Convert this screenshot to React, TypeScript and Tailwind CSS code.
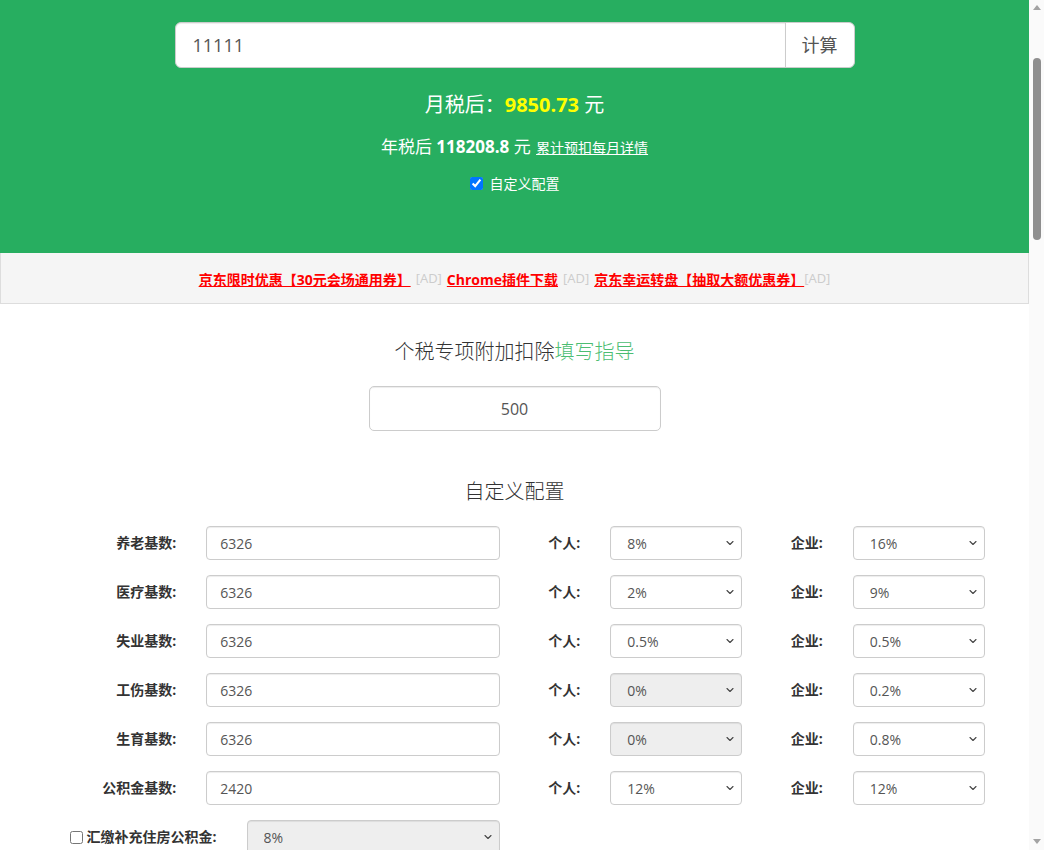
import React, { useState } from 'react';
import { ChevronDown } from 'lucide-react';

type Row = {
  label: string;
  base: string;
  personal: string;
  company: string;
  personalOff?: boolean;
};

const rows: Row[] = [
  { label: '养老基数:', base: '6326', personal: '8%', company: '16%' },
  { label: '医疗基数:', base: '6326', personal: '2%', company: '9%' },
  { label: '失业基数:', base: '6326', personal: '0.5%', company: '0.5%' },
  { label: '工伤基数:', base: '6326', personal: '0%', company: '0.2%', personalOff: true },
  { label: '生育基数:', base: '6326', personal: '0%', company: '0.8%', personalOff: true },
  { label: '公积金基数:', base: '2420', personal: '12%', company: '12%' },
];

const rates = ['0%', '0.2%', '0.5%', '0.8%', '1%', '2%', '3%', '5%', '7%', '8%', '9%', '10%', '12%', '16%', '20%'];

const Select = ({ value, disabled }: { value: string; disabled?: boolean }) => (
  <div className="relative">
    <select
      defaultValue={value}
      disabled={disabled}
      className={`block w-full h-[34px] appearance-none rounded-[4px] border border-[#ccc] pl-[16px] pr-[28px] text-[14px] text-[#555] shadow-[inset_0_1px_1px_rgba(0,0,0,0.075)] outline-none ${
        disabled ? 'bg-[#eee]' : 'bg-white'
      }`}
    >
      {rates.map(r => (
        <option key={r} value={r}>
          {r}
        </option>
      ))}
    </select>
    <ChevronDown className="pointer-events-none absolute right-[6px] top-1/2 -translate-y-1/2 h-[12px] w-[12px] text-[#444]" strokeWidth={2.2} />
  </div>
);

const Label = ({ children }: { children: React.ReactNode }) => (
  <label className="block px-[15px] text-right text-[14px] font-bold leading-[34px] text-[#333]">{children}</label>
);

export default function App() {
  const [salary, setSalary] = useState('11111');
  const [custom, setCustom] = useState(true);

  return (
    <div className="flex h-[850px] w-full overflow-hidden bg-white font-['Open_Sans','Noto_Sans_CJK_SC',sans-serif]">
      <div className="flex-1 min-w-0">
        {/* Result header */}
        <div className="bg-[#27ae60] pt-[22px] pb-[60px] text-white">
          <div className="mx-auto flex h-[46px] w-[680px]">
            <input
              value={salary}
              onChange={e => setSalary(e.target.value)}
              className="flex-1 min-w-0 rounded-l-[6px] border border-[#ccc] bg-white px-[17px] text-[18px] text-[#555] outline-none shadow-[inset_0_1px_1px_rgba(0,0,0,0.075)]"
            />
            <button className="-ml-px w-[70px] rounded-r-[6px] border border-[#ccc] bg-white text-[18px] text-[#555]">计算</button>
          </div>
          <p className="mt-[23px] h-[28px] text-center text-[20px] leading-[28px]">
            月税后：<span className="font-bold text-[#ffff00]">9850.73</span> 元
          </p>
          <p className="mt-[17px] h-[22px] text-center text-[17px] leading-[22px]">
            年税后 <span className="font-bold">118208.8</span> 元{' '}
            <a href="#" className="ml-[1px] text-[14px] underline">
              累计预扣每月详情
            </a>
          </p>
          <label className="mt-[15px] flex h-[20px] items-center justify-center gap-[7px] text-[14px]">
            <input type="checkbox" checked={custom} onChange={e => setCustom(e.target.checked)} className="h-[13px] w-[13px]" />
            自定义配置
          </label>
        </div>

        {/* Ad bar */}
        <div className="flex h-[51px] items-center justify-center border border-t-0 border-[#ddd] bg-[#f5f5f5] pt-[2px] text-[14px]">
          <a href="#" className="font-bold text-[#f00] underline">京东限时优惠【30元会场通用券】 </a>
          <span className="mx-[5px] text-[13px] text-[#ccc]">[AD]</span>
          <a href="#" className="font-bold text-[#f00] underline">Chrome插件下载</a>
          <span className="mx-[5px] text-[13px] text-[#ccc]">[AD]</span>
          <a href="#" className="font-bold text-[#f00] underline">京东幸运转盘【抽取大额优惠券】 </a>
          <span className="text-[13px] text-[#ccc]">[AD]</span>
        </div>

        {/* Special deduction */}
        <h3 className="mt-[34px] h-[28px] text-center text-[20px] font-light leading-[28px] text-[#333]">
          个税专项附加扣除<a href="#" className="text-[#4cbd72]">填写指导</a>
        </h3>
        <input
          defaultValue="500"
          className="mx-auto mt-[20px] block h-[45px] w-[292px] rounded-[5px] border border-[#ccc] text-center text-[16px] text-[#555] outline-none shadow-[inset_0_1px_1px_rgba(0,0,0,0.075)]"
        />

        <h3 className="mt-[47px] h-[28px] text-center text-[20px] font-light leading-[28px] text-[#333]">自定义配置</h3>

        {/* Config form */}
        <div className="mx-auto mt-[20px] w-[970px]">
          {rows.map(row => (
            <div key={row.label} className="mb-[15px] grid grid-cols-[4fr_8fr_2fr_4fr_2fr_4fr] items-center">
              <Label>{row.label}</Label>
              <div className="px-[15px]">
                <input
                  defaultValue={row.base}
                  className="block h-[34px] w-full rounded-[4px] border border-[#ccc] px-[13px] text-[14px] text-[#555] outline-none shadow-[inset_0_1px_1px_rgba(0,0,0,0.075)]"
                />
              </div>
              <Label>个人:</Label>
              <div className="px-[15px]">
                <Select value={row.personal} disabled={row.personalOff} />
              </div>
              <Label>企业:</Label>
              <div className="px-[15px]">
                <Select value={row.company} />
              </div>
            </div>
          ))}
          <div className="mb-[15px] grid grid-cols-[5fr_7fr_12fr] items-center">
            <label className="flex items-center justify-end gap-[4px] px-[15px] text-[14px] font-bold leading-[34px] text-[#333]">
              <input type="checkbox" className="h-[13px] w-[13px]" />
              汇缴补充住房公积金:
            </label>
            <div className="px-[15px]">
              <Select value="8%" disabled />
            </div>
          </div>
        </div>
      </div>

      {/* Scrollbar */}
      <div className="flex w-[15px] shrink-0 flex-col items-center bg-[#fafafa]">
        <div className="mt-[5px] h-0 w-0 border-x-[4px] border-b-[5px] border-x-transparent border-b-[#a3a3a3]" />
        <div className="mt-[48px] h-[182px] w-[8px] rounded-full bg-[#8e8e8e]" />
        <div className="flex-1" />
        <div className="mb-[6px] h-0 w-0 border-x-[4px] border-t-[5px] border-x-transparent border-t-[#a3a3a3]" />
      </div>
    </div>
  );
}
